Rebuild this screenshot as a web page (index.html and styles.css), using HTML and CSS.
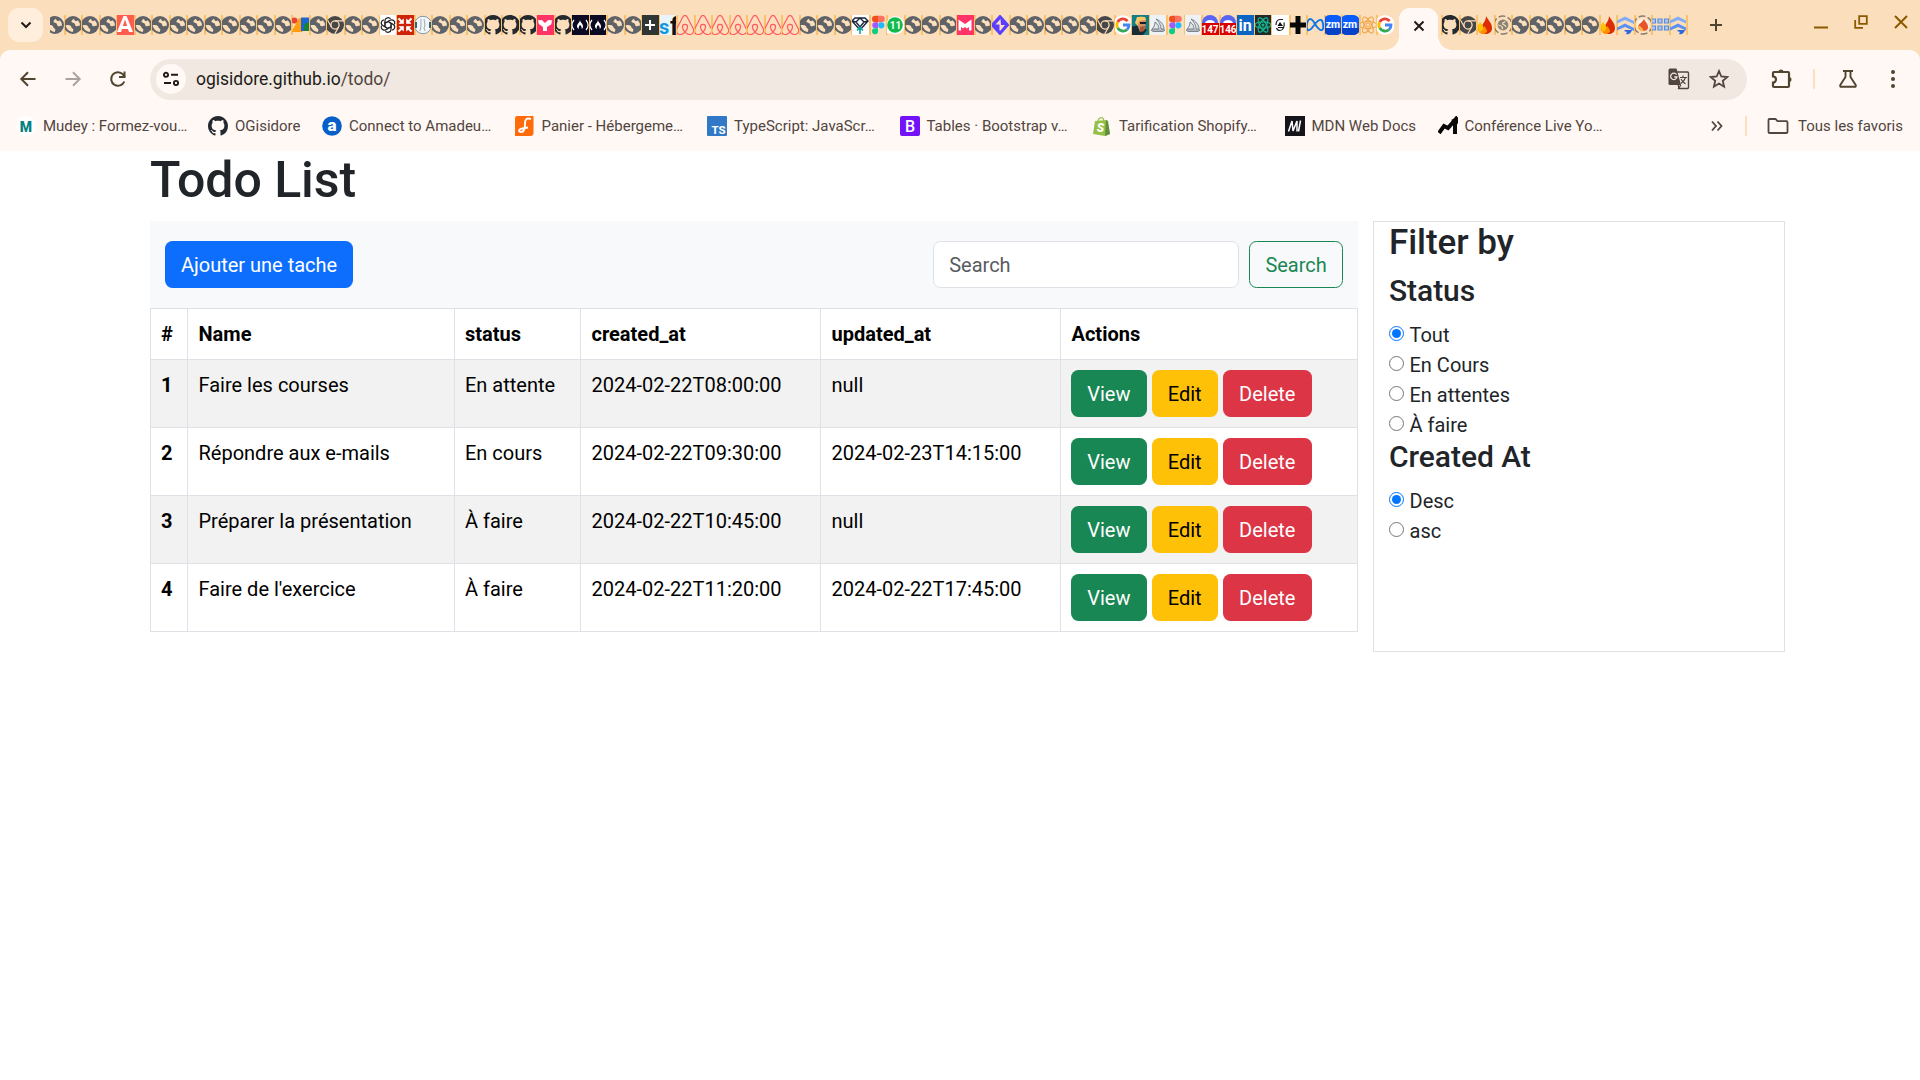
FILE: index.html
```html
<!DOCTYPE html>
<html lang="fr">
<head>
<meta charset="utf-8">
<title>Todo List</title>
<link rel="stylesheet" href="styles.css">
</head>
<body>
<svg class="defs" aria-hidden="true">
  <symbol id="globe" viewBox="0 0 20 20"><circle cx="10" cy="10" r="9" fill="#5f6368"/><path d="M10.800 3.800C9 5 8 6.300 8.800 7.400c.8 1 2.400.2 3 1.400.4 1 .2 2.200 1.400 2.500 1 .2 2-.8 3.800-.8A7.400 7.400 0 0 0 14.800 5.200c-.6.900-1.900.8-2.800.5z" fill="#fbdebc"/><path d="M2.600 10.300c2.200-.5 4.400-.3 5.400 1 .8 1 .1 1.800 1.500 2.300 1.200.5 1 1.700.2 3.400C6.500 16.500 3.300 14.300 2.600 10.300z" fill="#fbdebc"/></symbol>
  <symbol id="github" viewBox="0 0 16 16"><path fill="#24292f" d="M8 0C3.580 0 0 3.580 0 8c0 3.540 2.290 6.530 5.470 7.590.4.070.55-.17.55-.38 0-.19-.01-.82-.01-1.490-2.010.37-2.530-.49-2.690-.94-.09-.23-.48-.94-.82-1.130-.28-.15-.68-.52-.01-.53.63-.01 1.080.58 1.230.82.720 1.210 1.870.87 2.330.66.070-.52.28-.87.51-1.070-1.780-.2-3.640-.89-3.640-3.950 0-.87.31-1.590.82-2.150-.08-.2-.36-1.020.08-2.120 0 0 .67-.21 2.200.82.64-.18 1.320-.27 2-.27s1.360.09 2 .27c1.530-1.040 2.200-.82 2.200-.82.44 1.100.16 1.920.08 2.120.51.56.82 1.270.82 2.150 0 3.070-1.870 3.750-3.650 3.950.29.25.54.73.54 1.480 0 1.070-.01 1.930-.01 2.200 0 .21.15.46.55.38A8.010 8.010 0 0 0 16 8c0-4.420-3.580-8-8-8z"/></symbol>
  <symbol id="angular" viewBox="0 0 20 20"><path fill="#ff5c4d" d="M1 0h18v20H1z"/><path d="M2 17 8.500 1h3L18 17" fill="#fff"/><path d="M6 17l1-3h6l1 3zM7.800 11 10 4.500l2.200 6.500z" fill="#ff5c4d"/></symbol>
  <symbol id="looker" viewBox="0 0 20 20"><circle cx="4.500" cy="5.500" r="3" fill="#ea4335"/><path d="M1.500 17 9 3l3.500 1v13z" fill="#ff9e0f"/><path d="M11 2.500h8V16h-8z" fill="#1967d2"/><path d="M14 10a4.500 4.500 0 0 1 5-2v8h-5z" fill="#188038"/></symbol>
  <symbol id="chrome" viewBox="0 0 20 20"><circle cx="10" cy="10" r="9" fill="#474747"/><circle cx="10" cy="10" r="4.100" fill="none" stroke="#fbdebc" stroke-width="1.300"/><path d="M10 5.900h8.200M6.400 12 2.600 5.300M13.600 12l-3.900 7" stroke="#fbdebc" stroke-width="1.200"/></symbol>
  <symbol id="openai" viewBox="0 0 20 20"><path fill="#fff" d="M0 0h20v20H0z"/><g fill="none" stroke="#222" stroke-width="1.200"><path d="M7 10.500V5.700a3 3 0 0 1 5.600-1.500M7 8.200l4.300-2.500"/><path d="M7 10.500V5.700a3 3 0 0 1 5.600-1.500M7 8.200l4.300-2.500" transform="rotate(60 10 10)"/><path d="M7 10.500V5.700a3 3 0 0 1 5.600-1.500M7 8.200l4.300-2.500" transform="rotate(120 10 10)"/><path d="M7 10.500V5.700a3 3 0 0 1 5.600-1.500M7 8.200l4.300-2.500" transform="rotate(180 10 10)"/><path d="M7 10.500V5.700a3 3 0 0 1 5.600-1.500M7 8.200l4.300-2.500" transform="rotate(240 10 10)"/><path d="M7 10.500V5.700a3 3 0 0 1 5.600-1.500M7 8.200l4.300-2.500" transform="rotate(300 10 10)"/></g></symbol>
  <symbol id="collapse" viewBox="0 0 20 20"><path fill="#cf2209" d="M0 0h20v20H0z"/><path d="M3 4.200 4.200 3l2.600 2.600L8.500 4v4.500H4l1.600-1.700zM17 4.200 15.800 3l-2.600 2.600L11.500 4v4.500H16l-1.600-1.700zM3 15.800 4.200 17l2.600-2.600L8.500 16v-4.500H4l1.600 1.700zM17 15.800 15.800 17l-2.600-2.600-1.700 1.600v-4.500H16l-1.600 1.700z" fill="#fff" stroke="#fff" stroke-width=".6"/></symbol>
  <symbol id="badge" viewBox="0 0 20 20"><circle cx="10" cy="10" r="8.700" fill="#f3f7f9" stroke="#8199a4" stroke-width="1"/><path d="M1 7h3v6H1zM16 7h3v6h-3z" fill="#286781"/><path d="M8 4v7l-1 5M11 4l1 6-1 3 1 3" fill="none" stroke="#98a9b3" stroke-width="1"/></symbol>
  <symbol id="pinky" viewBox="0 0 20 20"><path fill="#ff3366" d="M0 0h20v20H0z"/><path d="M3 5.200 6.800 5 10 8l3.200-3 3.800.2-.7 4L12 12v4H8v-4L3.800 9z" fill="#fff"/></symbol>
  <symbol id="fcc" viewBox="0 0 20 20"><path fill="#0a0a23" d="M0 0h20v20H0z"/><path d="M4 5C1.500 8 1.500 12 4 15M16 5c2.500 3 2.500 7 0 10" fill="none" stroke="#fff" stroke-width="1.200"/><path d="M10 5c.2 2.500 3 3.600 3 6.500 0 1.300-.5 2-1.300 2.500.2-2-.4-2.800-1.700-4-1.300 1.500-1.500 2.500-1.300 4-1-.7-1.700-1.500-1.700-2.800C7 8.800 9.500 8 10 5z" fill="#fff"/></symbol>
  <symbol id="plusbox" viewBox="0 0 20 20"><path fill="#303633" d="M0 0h20v20H0z"/><path d="M10 5v10M5 10h10" stroke="#fff" stroke-width="2"/></symbol>
  <symbol id="sf" viewBox="0 0 20 20"><path fill="#e9f5fb" d="M0 0h20v20H0z"/><text x="1" y="19" font-size="20" font-weight="700" fill="#1296dc">s</text><text x="12" y="20" font-size="25" font-weight="700" fill="#111">f</text></symbol>
  <symbol id="airbnb" viewBox="0 0 20 20"><path d="M10 17.200C6.500 13 6.600 9.300 10 9.300s3.500 3.700 0 7.900c-2.200 2.600-4.300 2.600-6.200 2-2.500-.9-3-3.500-2.200-5.200L7.700 2.300C9-.2 11-.2 12.300 2.300L18.400 14c.8 1.700.3 4.300-2.200 5.200-1.900.6-4 .6-6.200-2z" fill="none" stroke="#ff5a5f" stroke-width="1.200"/></symbol>
  <symbol id="gem" viewBox="0 0 20 20"><path fill="#fff" d="M0 0h20v20H0z"/><path d="m2 6 3-3h10l3 3-8 9zM2 6l4 1 4-4 4 4 4-1M6 7l4 5 4-5" fill="none" stroke="#17243d" stroke-width="1.400"/><path d="M10 19v-6m-3 2.500 3-3 3 3" fill="none" stroke="#10a9a0" stroke-width="1.600"/></symbol>
  <symbol id="figma" viewBox="0 0 20 20"><path d="M4 4a3.300 3.300 0 0 1 3.300-3.300H10v6.600H7.300A3.300 3.300 0 0 1 4 4z" fill="#f24e1e"/><path d="M10 .7h3.500a3.300 3.300 0 0 1 0 6.600H10z" fill="#ff7262"/><path d="M7.300 7.300H10v6H7.300a3 3 0 0 1 0-6z" fill="#a259ff"/><circle cx="13.300" cy="10.300" r="3.100" fill="#1abcfe"/><path d="M7.300 13.300H10v3a3 3 0 1 1-2.700-3z" fill="#0acf83"/></symbol>
  <symbol id="whatsapp" viewBox="0 0 20 20"><path d="M1 19l1.300-5A9 9 0 1 1 6 18z" fill="#fff"/><circle cx="10" cy="10" r="7.800" fill="#12b94c"/><text x="4.700" y="13.700" font-size="10" font-weight="700" fill="#fff">11</text></symbol>
  <symbol id="malt" viewBox="0 0 20 20"><path fill="#ff3368" d="M0 0h20v20H0z"/><path d="M3.500 4.500 10 9l6.500-4.500v11H14V12l-2 1.500-2-1.500-2 1.500L6 12v3.500H3.500z" fill="#fff"/></symbol>
  <symbol id="bolt" viewBox="0 0 20 20"><path d="M9.500 0 .5 10l9 10h1l9-10-9-10z" fill="#5a3fff"/><path d="M10.500 4 5.500 9.500h4v6h1l4.500-5.500h-4z" fill="#fbdebc"/></symbol>
  <symbol id="google" viewBox="0 0 20 20"><circle cx="10" cy="10" r="9.800" fill="#fff"/><g fill="none" stroke-width="2.800"><path d="M14.600 6A6.100 6.100 0 0 0 4.700 7" stroke="#ea4335"/><path d="M4.700 7a6.300 6.300 0 0 0 0 6" stroke="#fbbc05"/><path d="M4.700 13a6.100 6.100 0 0 0 9.400 1.500" stroke="#34a853"/><path d="M14.100 14.500A6 6 0 0 0 16 10h-6" stroke="#4285f4"/></g></symbol>
  <symbol id="avatar" viewBox="0 0 20 20"><path fill="#137f89" d="M0 0h20v20H0z"/><path d="M0 12v8h13l4-5-7-5z" fill="#192c35"/><path d="M8 3c3-3 8-1 8 3l-1 8-5 3-3-8z" fill="#d28b63"/><path d="M7 2h8l1 3-7 1-1 5-3-3z" fill="#f4c965"/><path d="M10 7h6v2h-6z" fill="#172125"/><path d="m10 12 5-1-1 5-4 1z" fill="#ac572f"/></symbol>
  <symbol id="sail" viewBox="0 0 20 20"><path fill="#eef2f5" d="M0 0h20v20H0z"/><path d="M8 4c5 2 8 6 8 10h-3c0-4-2-7-5-10zM7 7c3 2 4 4 4 7H4c2-2 3-4 3-7zM3 15h14l-2 1.500H5z" fill="#dfe3e6" stroke="#626a73" stroke-width=".8"/></symbol>
  <symbol id="count147" viewBox="0 0 20 20"><circle cx="10" cy="8" r="8" fill="#5865f2"/><path d="M5 8c1-4 9-4 10 0z" fill="#fff"/><path d="M0 8h20v12H0z" fill="#d90000"/><text x="10" y="18" text-anchor="middle" font-size="10" font-weight="700" fill="#fff">147</text></symbol>
  <symbol id="count146" viewBox="0 0 20 20"><circle cx="10" cy="8" r="8" fill="#5865f2"/><path d="M5 8c1-4 9-4 10 0z" fill="#fff"/><path d="M0 8h20v12H0z" fill="#d90000"/><text x="10" y="18" text-anchor="middle" font-size="10" font-weight="700" fill="#fff">146</text></symbol>
  <symbol id="linkedin" viewBox="0 0 20 20"><path fill="#0a66c2" d="M0 0h20v20H0z"/><text x="10" y="16" text-anchor="middle" font-size="16" font-weight="700" fill="#fff">in</text></symbol>
  <symbol id="react" viewBox="0 0 20 20"><path fill="#222b2b" d="M0 0h20v20H0z"/><g fill="none" stroke="#14b58f" stroke-width="1.200"><ellipse cx="10" cy="10" rx="8" ry="3.200"/><ellipse cx="10" cy="10" rx="8" ry="3.200" transform="rotate(60 10 10)"/><ellipse cx="10" cy="10" rx="8" ry="3.200" transform="rotate(120 10 10)"/></g><circle cx="10" cy="10" r="1.500" fill="#14b58f"/></symbol>
  <symbol id="orb" viewBox="0 0 20 20"><path fill="#fff" d="M0 0h20v20H0z"/><path d="M13 4.500H9.500C7 5 6 7.500 6 10M14 7.500c1 4-1 8-4 8-2 0-3-1-3.500-2.500" fill="none" stroke="#222" stroke-width="1.200"/><path d="m7.500 11 2.500-4 3 4zM8 12h5v1H8z" fill="#111"/></symbol>
  <symbol id="cross" viewBox="0 0 20 20"><path d="M7.500 1h5v6.500H19v5h-6.500V19h-5v-6.500H1v-5h6.500z" fill="#080808"/></symbol>
  <symbol id="meta" viewBox="0 0 20 20"><path d="M10 9C7 3 4 2.500 2.500 7c-1.300 4-1 8.200 1 8.200C6 15.200 7.500 12 10 9s4-4.700 6-4c2.300.8 3.400 10.200.5 10.200C14 15.200 12.500 13 10 9z" fill="none" stroke="#0877ed" stroke-width="1.900"/></symbol>
  <symbol id="zoom" viewBox="0 0 20 20"><rect x=".5" width="19" height="20" rx="6" fill="#0b5cff"/><path d="M.5 13h19v1a6 6 0 0 1-6 6h-7a6 6 0 0 1-6-6z" fill="#0743c9"/><text x="10" y="13" text-anchor="middle" font-size="10.500" font-weight="700" fill="#fff">zm</text></symbol>
  <symbol id="atom" viewBox="0 0 20 20"><g fill="none" stroke="#f2a447" stroke-width="1"><ellipse cx="10" cy="10" rx="9" ry="3.500"/><ellipse cx="10" cy="10" rx="9" ry="3.500" transform="rotate(60 10 10)"/><ellipse cx="10" cy="10" rx="9" ry="3.500" transform="rotate(120 10 10)"/></g><circle cx="10" cy="10" r="2" fill="none" stroke="#f2a447"/></symbol>
  <symbol id="fire" viewBox="0 0 20 20"><path d="M11 1c2 4 6 7 6 12 0 4-3 6-7 6s-7-2-7-6c0-2 1-4 2-5l2 3C8 8 11 6 11 1z" fill="#dd2c00"/><path d="M3 12c0-2 1-4 2-5l3 4c1 3 2 4 4 5-1 3-9 5-9-4z" fill="#ffc400"/><path d="M9 19c4-2 3-5 0-8 0 3-2 5-5 6 1 1 3 2 5 2z" fill="#ff9100"/></symbol>
  <symbol id="globe-loading" viewBox="0 0 20 20"><circle cx="10" cy="10" r="9" fill="none" stroke="#867c70" stroke-width="1.400" stroke-dasharray="7 2.400"/><svg x="4" y="4" width="12" height="12" viewBox="0 0 20 20"><circle cx="10" cy="10" r="9" fill="#8c8273"/><path d="M2 10c3 0 5 1 7 4v3M9 7l5-3M9 7c0 3 5 2 6 6" fill="none" stroke="#fbdebc" stroke-width="2"/></svg></symbol>
  <symbol id="fire-loading" viewBox="0 0 20 20"><circle cx="10" cy="10" r="9" fill="none" stroke="#867c70" stroke-width="1.400" stroke-dasharray="7 2.400"/><circle cx="10" cy="10" r="6.500" fill="#fff0e2"/><path d="M11 4c1 3 4 4 4 8 0 3-2 4-5 4s-5-2-5-4c0-3 3-3 6-8z" fill="#e9532c"/><path d="M5 11c2-1 4 2 6 5-3 1-6-1-6-5z" fill="#ffb444"/></symbol>
  <symbol id="flow" viewBox="0 0 20 20"><path d="m1 6 9-4.500L19 6v3l-9-4-9 4z" fill="#82adf5"/><path d="m1 13 9-4.500 9 4.500v3l-9-4-9 4z" fill="#5b91ef"/><path d="m10 15 7 0c-1 3-3 5-6 4l1-2-3-1z" fill="#2d69dc"/></symbol>
  <symbol id="grid" viewBox="0 0 20 20"><g fill="#b2c9ec" stroke="#568be0" stroke-width="1.200"><path d="M1.500 4h4v4h-4zM8 4h4v4H8zM14.500 4h4v4h-4zM1.500 11h4v4h-4zM8 11h4v4H8zM14.500 11h4v4h-4z"/></g></symbol>
</svg>

<header class="browser">
  <div class="tabstrip">
    <button class="tab-search" aria-label="Rechercher des onglets"><svg width="12" height="8" viewBox="0 0 12 8"><path d="m1.500 1.500 4.500 4.500 4.500-4.500" fill="none" stroke="#201b16" stroke-width="2"/></svg></button>
    <div class="tabs" id="tabs-before"></div>
    <div class="tab-active"><svg width="12" height="12" viewBox="0 0 12 12"><path d="m1.500 1.500 9 9m0-9-9 9" stroke="#201b16" stroke-width="2"/></svg></div>
    <div class="tabs tabs-after" id="tabs-after"></div>
    <svg class="new-tab" width="14" height="14" viewBox="0 0 14 14"><path d="M7 1v12M1 7h12" stroke="#51452f" stroke-width="2"/></svg>
    <div class="window-controls">
      <svg width="16" height="16" viewBox="0 0 16 16"><path d="M1 13.500h14" stroke="#8a5a00" stroke-width="2"/></svg>
      <svg width="16" height="16" viewBox="0 0 16 16"><path d="M6.200 2.200h7.600v7.600H6.200zM2.200 6v7.800H10" fill="none" stroke="#8a5a00" stroke-width="1.800"/></svg>
      <svg width="16" height="16" viewBox="0 0 16 16"><path d="m2 2 12 12m0-12L2 14" stroke="#8a5a00" stroke-width="2"/></svg>
    </div>
  </div>

  <div class="toolbar">
    <div class="nav">
      <svg width="20" height="20" viewBox="0 0 20 20"><path d="M17.500 10H4M10 3.300 3.300 10l6.700 6.700" fill="none" stroke="#51452f" stroke-width="2"/></svg>
      <svg width="20" height="20" viewBox="0 0 20 20"><path d="M2.500 10H16M10 3.300l6.700 6.700-6.700 6.700" fill="none" stroke="#aaa39d" stroke-width="2"/></svg>
      <svg width="20" height="20" viewBox="0 0 20 20"><path d="M16.300 12.500A6.800 6.800 0 1 1 15 5.400L16.800 8" fill="none" stroke="#51452f" stroke-width="2"/><path d="M17.500 2.500V9h-6.500V7h4.500V2.500z" fill="#51452f"/></svg>
    </div>
    <div class="omnibox">
      <span class="site-info"><svg width="18" height="16" viewBox="0 0 18 16"><g fill="none" stroke="#201b16" stroke-width="1.900"><circle cx="4" cy="3.800" r="2.100"/><circle cx="14" cy="12" r="2.100"/><path d="M9 3.800h7M2 12h7"/></g></svg></span>
      <span class="url">ogisidore.github.io<span class="path">/todo/</span></span>
      <svg class="translate" width="22" height="22" viewBox="0 0 22 22"><path d="M8 4h11.500q1 0 1 1v14.500q0 1-1 1H11z" fill="none" stroke="#51453e" stroke-width="1.400"/><path d="M2 .5h6.500L13 17H2q-1.500 0-1.500-1.500V2Q.5.500 2 .500z" fill="#51453e"/><path d="M8.500 6.600A3.200 3.200 0 1 0 9 9H6.200" fill="none" stroke="#f1e8e2" stroke-width="1.300"/><path d="M12 9.500h7M15 7.500v2M17.500 9.500c-1 3-2.500 4.500-4.500 6M13 11c1 2 2.500 3.500 4.500 5M10 21l3-4" fill="none" stroke="#51453e" stroke-width="1.200"/></svg>
      <svg width="20" height="20" viewBox="0 0 20 20"><path d="m10 2 2.300 5.500 6 .5-4.500 3.900 1.300 5.800-5.100-3.100-5.100 3.100 1.300-5.800L1.700 8l6-.5z" fill="none" stroke="#51453e" stroke-width="1.800"/></svg>
    </div>
    <div class="toolbar-end">
      <svg width="24" height="24" viewBox="0 0 24 24"><path d="M5 5h14q1 0 1 1v13q0 1-1 1H5q-1 0-1-1v-3.500a3 3 0 0 0 0-6V6q0-1 1-1z" fill="none" stroke="#51452f" stroke-width="2.200"/><path d="M9.500 5a2.500 2.500 0 0 1 5 0M20 10a2.500 2.500 0 0 1 0 5" fill="#51452f"/></svg>
      <span class="divider"></span>
      <svg width="20" height="20" viewBox="0 0 20 20"><path d="M5 2h10M7.500 2v6L2.300 16q-.7 1.800 1.200 1.800h13q1.900 0 1.200-1.800L12.500 8V2" fill="none" stroke="#51452f" stroke-width="1.900"/></svg>
      <svg width="6" height="20" viewBox="0 0 6 20"><g fill="#51452f"><circle cx="3" cy="3" r="2"/><circle cx="3" cy="10" r="2"/><circle cx="3" cy="17" r="2"/></g></svg>
    </div>
  </div>

  <div class="bookmarks">
    <span class="bookmark"><svg width="20" height="20" viewBox="0 0 20 20"><circle cx="10" cy="10" r="10" fill="#fff"/><text x="10" y="15.800" text-anchor="middle" font-size="14" font-weight="900" fill="#087f80">M</text></svg>Mudey : Formez-vou…</span>
    <span class="bookmark short"><svg width="20" height="20"><use href="#github"/></svg>OGisidore</span>
    <span class="bookmark"><svg width="20" height="20" viewBox="0 0 20 20"><circle cx="10" cy="10" r="9.800" fill="#075fc7"/><text x="10" y="15.200" text-anchor="middle" font-size="17" font-weight="900" fill="#fff">a</text></svg>Connect to Amadeu…</span>
    <span class="bookmark"><svg width="20" height="20" viewBox="0 0 20 20"><path d="M2 0h16.500v17q0 3-3 3H0V3Q0 0 2 0z" fill="#ff6b0b"/><path d="M16 3c-5-1.500-6 1-6 5 0 5-1 8-4 8-3 0-2.500-3 1-3.500l6-1" fill="none" stroke="#fff" stroke-width="1.900"/></svg>Panier - Hébergeme…</span>
    <span class="bookmark"><svg width="20" height="20" viewBox="0 0 20 20"><rect width="20" height="20" rx="1" fill="#3178c6"/><text x="11.500" y="18" text-anchor="middle" font-size="11.500" font-weight="700" fill="#fff">TS</text></svg>TypeScript: JavaScr…</span>
    <span class="bookmark"><svg width="20" height="20" viewBox="0 0 20 20"><rect width="20" height="20" rx="2" fill="#7412f7"/><text x="10" y="15.500" text-anchor="middle" font-size="16" font-weight="500" fill="#fff">B</text></svg>Tables · Bootstrap v…</span>
    <span class="bookmark"><svg width="20" height="20" viewBox="0 0 20 20"><path d="m3 5 12-1 3 14-5 2-12-2z" fill="#95bf47"/><path d="m14 4 2 1 2 13-5 2z" fill="#5e8e3e"/><path d="M6 6c0-4 5-7 6-1" fill="none" stroke="#95bf47" stroke-width="1.200"/><text x="8.500" y="16" text-anchor="middle" font-size="12" font-weight="900" font-style="italic" fill="#fff">S</text></svg>Tarification Shopify…</span>
    <span class="bookmark medium"><svg width="20" height="20" viewBox="0 0 20 20"><path d="M0 0h20v20H0z" fill="#15141a"/><path d="M3.500 15.500 7 5l1 10 4-10v10.500M15.500 4.500l-2 11" fill="none" stroke="#fff" stroke-width="1.500"/></svg>MDN Web Docs</span>
    <span class="bookmark"><svg width="20" height="20" viewBox="0 0 20 20"><path d="m1 17 5-7 4 2 7-8v14" fill="none" stroke="#080808" stroke-width="4"/><path d="m13 4 7-3v7z" fill="#080808"/></svg>Conférence Live Yo…</span>
    <span class="bookmarks-end">
      <svg width="12" height="12" viewBox="0 0 12 12"><path d="m1 1.500 4 4.500-4 4.500M6.500 1.500l4 4.500-4 4.500" fill="none" stroke="#51453e" stroke-width="1.800"/></svg>
      <span class="divider"></span>
      <svg width="22" height="18" viewBox="0 0 22 18"><path d="M2.500 2h6l2 2.200h8.800q1.200 0 1.200 1.200v9.600q0 1-1.200 1H2.700q-1.200 0-1.200-1V3q0-1 1-1z" fill="none" stroke="#51453e" stroke-width="1.800"/></svg>
      <span>Tous les favoris</span>
    </span>
  </div>
</header>

<main class="page">
  <h1>Todo List</h1>
  <div class="layout">
    <section class="todo">
      <div class="actions-bar">
        <button class="btn primary">Ajouter une tache</button>
        <form class="search"><input type="search" placeholder="Search" aria-label="Search"><button type="button" class="btn outline">Search</button></form>
      </div>
      <table>
        <colgroup><col class="c-id"><col class="c-name"><col class="c-status"><col class="c-date"><col class="c-date"><col></colgroup>
        <thead><tr><th>#</th><th>Name</th><th>status</th><th>created_at</th><th>updated_at</th><th>Actions</th></tr></thead>
        <tbody>
          <tr><th>1</th><td>Faire les courses</td><td>En attente</td><td>2024-02-22T08:00:00</td><td>null</td><td><div class="row-actions"><button class="btn view">View</button><button class="btn edit">Edit</button><button class="btn delete">Delete</button></div></td></tr>
          <tr><th>2</th><td>Répondre aux e-mails</td><td>En cours</td><td>2024-02-22T09:30:00</td><td>2024-02-23T14:15:00</td><td><div class="row-actions"><button class="btn view">View</button><button class="btn edit">Edit</button><button class="btn delete">Delete</button></div></td></tr>
          <tr><th>3</th><td>Préparer la présentation</td><td>À faire</td><td>2024-02-22T10:45:00</td><td>null</td><td><div class="row-actions"><button class="btn view">View</button><button class="btn edit">Edit</button><button class="btn delete">Delete</button></div></td></tr>
          <tr><th>4</th><td>Faire de l'exercice</td><td>À faire</td><td>2024-02-22T11:20:00</td><td>2024-02-22T17:45:00</td><td><div class="row-actions"><button class="btn view">View</button><button class="btn edit">Edit</button><button class="btn delete">Delete</button></div></td></tr>
        </tbody>
      </table>
    </section>
    <aside class="filters">
      <h3>Filter by</h3>
      <h4>Status</h4>
      <label><input type="radio" name="status" checked>Tout</label>
      <label><input type="radio" name="status">En Cours</label>
      <label><input type="radio" name="status">En attentes</label>
      <label><input type="radio" name="status">À faire</label>
      <h4 class="order-title">Created At</h4>
      <label><input type="radio" name="order" checked>Desc</label>
      <label><input type="radio" name="order">asc</label>
    </aside>
  </div>
</main>
<script src="tabs.js"></script>
</body>
</html>
```

FILE: styles.css
```css
* { box-sizing: border-box; }
body { margin: 0; background: #fff; color: #212529; font-family: Roboto, sans-serif; font-size: 20px; line-height: 30px; }
svg { display: block; flex: none; }
button, input { font: inherit; }
.defs { display: none; }

/* Browser window */
.browser { background: #fbdebc; color: #51453e; }
.tabstrip { display: flex; align-items: center; height: 50px; padding-left: 8px; }
.tab-search { display: flex; align-items: center; justify-content: center; width: 35px; height: 34px; margin-right: 7px; padding: 0; border: 0; border-radius: 11px; background: #ffeedc; }
.tabs { display: flex; justify-content: flex-end; width: 1343.500px; height: 20px; overflow: hidden; }
.tabs-after { justify-content: flex-start; width: 247px; }
.tab { display: flex; flex: none; justify-content: center; width: 17.5px; height: 20px; overflow: hidden; border-left: 1px solid #fbc26b; background: linear-gradient(90deg, #fbc26b 1px, transparent 1px); }
.tab-end { width: 2px; height: 20px; background: #fbc26b; }
.tab-active { position: relative; display: flex; align-items: center; justify-content: center; align-self: flex-end; width: 39px; height: 42px; margin: 0 3px 0 5.500px; border-radius: 11px 11px 0 0; background: #fff8f5; }
.tab-active::before, .tab-active::after { content: ""; position: absolute; bottom: 0; width: 14px; height: 14px; }
.tab-active::before { right: 100%; background: radial-gradient(circle at 0 0, transparent 13.500px, #fff8f5 14px); }
.tab-active::after { left: 100%; background: radial-gradient(circle at 100% 0, transparent 13.500px, #fff8f5 14px); }
.tab-active svg { margin-bottom: 6px; }
.new-tab { margin-left: 21px; }
.window-controls { display: flex; gap: 24px; margin: 0 11px 7px auto; }

.toolbar { display: flex; align-items: center; height: 58px; padding: 0 24.500px 0 18px; border-radius: 10px 10px 0 0; background: #fff8f5; }
.nav { display: flex; gap: 25px; width: 132px; }
.omnibox { display: flex; align-items: center; width: 1597px; height: 41px; padding: 0 18px 0 6px; border-radius: 21px; background: #f1e8e2; }
.site-info { display: flex; align-items: center; justify-content: center; width: 30px; height: 30px; margin-right: 10px; border-radius: 50%; background: #fff8f5; }
.url { color: #201b16; font-size: 17.500px; }
.url .path { color: #51453e; }
.translate { margin: 0 19px 0 auto; }
.toolbar-end { display: flex; align-items: center; margin-left: auto; }
.divider { width: 2px; height: 20px; border-radius: 1px; background: #fbdebc; }
.toolbar-end .divider { margin: 0 23px 0 20px; }
.toolbar-end svg:last-child { margin-left: 32px; }

.bookmarks { display: flex; align-items: center; height: 43px; padding: 0 17px 7px 16px; background: #fff8f5; font-size: 15px; line-height: 20px; }
.bookmark { display: flex; align-items: center; gap: 7px; flex: none; width: 192.500px; height: 100%; white-space: nowrap; }
.bookmark.short { width: 114px; }
.bookmark.medium { width: 153px; }
.bookmark:first-child { width: 192px; }
.bookmarks-end { display: flex; align-items: center; margin-left: auto; white-space: nowrap; }
.bookmarks-end .divider { margin: 0 20px 0 22px; }
.bookmarks-end span:last-child { margin-left: 9px; }

/* Todo application */
.page { padding: 0 135px 0 150px; margin-top: -1px; }
h1, h3, h4 { margin: 0; font-weight: 500; line-height: 1.2; }
h1 { margin-bottom: 11px; font-size: 50px; letter-spacing: -.05px; }
h3 { margin-bottom: 9px; font-size: 35px; letter-spacing: -.05px; }
h4 { margin-bottom: 11px; font-size: 30px; letter-spacing: -.05px; }
.order-title { margin-top: -1px; }
.layout { display: flex; align-items: flex-start; justify-content: space-between; }
.todo { width: 1208px; }
.actions-bar { display: flex; align-items: center; justify-content: space-between; height: 87px; padding: 0 15px; background: #f8f9fa; }
.search { display: flex; gap: 10px; margin: 0; }
.search input { width: 306px; height: 47px; padding: 0 15px; border: 1px solid #dee2e6; border-radius: 7.500px; background: #fff; }
.search input::placeholder { color: #595c5f; opacity: 1; }
.btn { height: 47px; padding: 0 16.200px; border: 0; border-radius: 7.500px; color: #fff; }
.primary { padding: 0 15.900px; background: #0d6efd; }
.outline { padding: 0 15.200px; border: 1px solid #198754; background: transparent; color: #198754; }
.view { background: #198754; }
.edit { background: #ffc107; color: #000; }
.delete { background: #dc3545; }
.row-actions { display: flex; gap: 5px; }

table { width: 1208px; border-collapse: collapse; table-layout: fixed; color: #000; }
.c-id { width: 37px; }
.c-name { width: 267px; }
.c-status { width: 126px; }
.c-date { width: 240px; }
th, td { height: 68px; padding: 10px 10px 0 10.500px; border: 1px solid #dee2e6; text-align: left; vertical-align: top; }
thead th { height: 51px; }
th { font-weight: 700; }
th:first-child, td:nth-child(3), th:nth-child(3), td:last-child { padding-left: 10px; }
tbody tr:nth-child(odd) { background: #f2f2f2; }

.filters { width: 412px; height: 431px; padding: 0 15px; border: 1px solid #dee2e6; }
.filters label { display: flex; align-items: center; height: 30px; }
.filters input { width: 15px; height: 15px; margin: 0 5.500px 3px 0; accent-color: #0075ff; }
```

FILE: tabs.js
```js
// Open tabs, in order, as [icon, repeat count].
const before = [
  ['globe', 4], ['angular', 1], ['globe', 9], ['looker', 1], ['globe', 1], ['chrome', 1],
  ['globe', 2], ['openai', 1], ['collapse', 1], ['badge', 1], ['globe', 3], ['github', 3],
  ['pinky', 1], ['github', 1], ['fcc', 2], ['globe', 2], ['plusbox', 1], ['sf', 1],
  ['airbnb', 7], ['globe', 3], ['gem', 1], ['figma', 1], ['whatsapp', 1], ['globe', 3],
  ['malt', 1], ['globe', 1], ['bolt', 1], ['globe', 5], ['chrome', 1], ['google', 1],
  ['avatar', 1], ['sail', 1], ['figma', 1], ['sail', 1], ['count147', 1], ['count146', 1],
  ['linkedin', 1], ['react', 1], ['orb', 1], ['cross', 1], ['meta', 1], ['zoom', 2],
  ['atom', 1], ['google', 1]
];
const after = [
  ['github', 1], ['chrome', 1], ['fire', 1], ['globe-loading', 1], ['globe', 5],
  ['fire', 1], ['flow', 1], ['fire-loading', 1], ['grid', 1], ['flow', 1]
];
const render = list => list.map(([icon, count]) =>
  `<span class="tab"><svg width="20" height="20"><use href="#${icon}"/></svg></span>`.repeat(count)
).join('');
document.getElementById('tabs-before').innerHTML = render(before);
document.getElementById('tabs-after').innerHTML = render(after) + '<span class="tab-end"></span>';
```
